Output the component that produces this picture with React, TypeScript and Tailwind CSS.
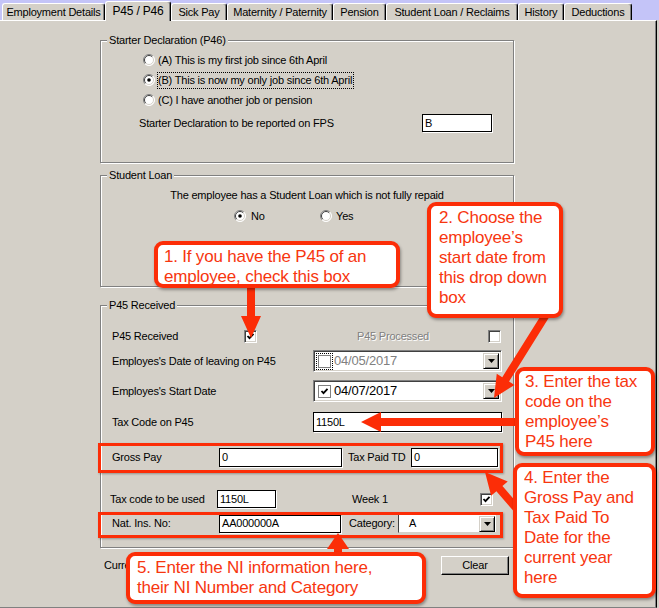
import React from 'react';

const RED = '#fc2d07';

const tabs = [
  { label: 'Employment Details', w: 'w-[103px]' },
  { label: 'P45 / P46', w: 'w-[66px]', active: true },
  { label: 'Sick Pay', w: 'w-[56px]' },
  { label: 'Maternity / Paternity', w: 'w-[106px]' },
  { label: 'Pension', w: 'w-[53px]' },
  { label: 'Student Loan / Reclaims', w: 'w-[132px]' },
  { label: 'History', w: 'w-[46px]' },
  { label: 'Deductions', w: 'w-[68px]' },
];

function Radio({ checked }: { checked?: boolean }) {
  return (
    <svg width="12" height="12" viewBox="0 0 12 12" className="shrink-0">
      <circle cx="6" cy="6" r="5.5" fill="#fff" />
      <path d="M2.1 9.9A5.5 5.5 0 0 1 9.9 2.1" stroke="#808080" fill="none" />
      <path d="M2.8 9.2A4.5 4.5 0 0 1 9.2 2.8" stroke="#404040" fill="none" />
      <path d="M9.9 2.1A5.5 5.5 0 0 1 2.1 9.9" stroke="#fff" fill="none" />
      <path d="M9.2 2.8A4.5 4.5 0 0 1 2.8 9.2" stroke="#d4d0c8" fill="none" />
      {checked && <circle cx="6" cy="6" r="1.8" fill="#000" />}
    </svg>
  );
}

function Check({ checked, flat }: { checked?: boolean; flat?: boolean }) {
  return (
    <div
      className={`w-[13px] h-[13px] shrink-0 bg-white flex items-center justify-center border ${
        flat
          ? 'border-[#808080]'
          : 'border-t-[#808080] border-l-[#808080] border-r-white border-b-white shadow-[inset_1px_1px_0_#404040,inset_-1px_-1px_0_#d4d0c8]'
      }`}
    >
      {checked && (
        <svg width="9" height="9" viewBox="0 0 9 9">
          <polyline points="1.5,4 3.5,6.2 7.5,1.8" fill="none" stroke="#000" strokeWidth="1.8" />
        </svg>
      )}
    </div>
  );
}

function DropBtn() {
  return (
    <div className="w-[16px] h-[16px] shrink-0 bg-[#d4d0c8] border border-t-[#d4d0c8] border-l-[#d4d0c8] border-r-black border-b-black shadow-[inset_1px_1px_0_#fff,inset_-1px_-1px_0_#808080] flex items-center justify-center">
      <svg width="7" height="4" viewBox="0 0 7 4">
        <polygon points="0,0 7,0 3.5,4" fill="#000" />
      </svg>
    </div>
  );
}

function Input({ value, w, h = 'h-[19px]' }: { value: string; w: string; h?: string }) {
  return (
    <div className={`${w} ${h} bg-white border border-black shadow-[1px_1px_0_#fff] flex items-center pl-[2px] text-black`}>
      {value}
    </div>
  );
}

function DatePicker({ value, checked, disabled }: { value: string; checked?: boolean; disabled?: boolean }) {
  return (
    <div className="w-[189px] h-[22px] bg-white border border-t-[#808080] border-l-[#808080] border-r-white border-b-white shadow-[inset_1px_1px_0_#404040,inset_-1px_-1px_0_#d4d0c8] flex items-center pl-[2px] pr-[2px]">
      <div className={`p-[1px] ${disabled ? 'border border-dotted border-black' : 'border border-transparent'}`}>
        <Check checked={checked} flat />
      </div>
      <span className={`ml-[1px] flex-1 text-[13px] ${disabled ? 'text-[#808080]' : 'text-black'}`}>{value}</span>
      <DropBtn />
    </div>
  );
}

function Group({ title, className, children }: { title: string; className: string; children: React.ReactNode }) {
  return (
    <div className={`relative ml-[100px] w-[414px] border border-[#808080] shadow-[inset_1px_1px_0_#fff,1px_1px_0_#fff] ${className}`}>
      <span className="absolute -top-[8px] left-[6px] bg-[#d4d0c8] px-[2px] leading-[14px]">{title}</span>
      {children}
    </div>
  );
}

function arrow(x1: number, y1: number, x2: number, y2: number, w = 8, hl = 20, hw = 20) {
  const dx = x2 - x1;
  const dy = y2 - y1;
  const len = Math.hypot(dx, dy);
  const ux = dx / len;
  const uy = dy / len;
  const nx = -uy;
  const ny = ux;
  const bx = x2 - ux * hl;
  const by = y2 - uy * hl;
  const p = [
    [x1 + (nx * w) / 2, y1 + (ny * w) / 2],
    [bx + (nx * w) / 2, by + (ny * w) / 2],
    [bx + (nx * hw) / 2, by + (ny * hw) / 2],
    [x2, y2],
    [bx - (nx * hw) / 2, by - (ny * hw) / 2],
    [bx - (nx * w) / 2, by - (ny * w) / 2],
    [x1 - (nx * w) / 2, y1 - (ny * w) / 2],
  ];
  return p.map((q) => q.join(',')).join(' ');
}

const callout =
  'absolute bg-white border-[4px] border-[#fc2d07] rounded-[9px] text-[#f7360f] text-[17px] leading-[20px] whitespace-nowrap shadow-[1px_2px_3px_rgba(0,0,0,0.35)] font-["Liberation_Sans",Arial,sans-serif]';

export default function App() {
  return (
    <div className="relative w-[659px] h-[608px] overflow-hidden bg-[#d4d0c8] text-[11px] tracking-[-0.2px] text-black font-['Liberation_Sans',Arial,sans-serif]">
      {/* tab strip */}
      <div className="h-[20px] bg-[#c4c4f8] flex items-end pl-[2px]">
        {tabs.map((t) => (
          <div
            key={t.label}
            className={`${t.w} shrink-0 bg-[#d4d0c8] flex items-center justify-center border-t border-l border-white border-r border-r-black rounded-t-[3px] shadow-[inset_-1px_0_0_#808080] ${
              t.active ? 'h-[20px] -mb-[1px] relative z-10 pb-[2px] text-[12px]' : 'h-[17px]'
            }`}
          >
            {t.label}
          </div>
        ))}
      </div>

      {/* body */}
      <div className="w-[657px] h-[588px] border-t border-white border-r border-r-black border-b border-b-[#808080] shadow-[inset_-1px_0_0_#808080]">
        <Group title="Starter Declaration (P46)" className="mt-[19px] h-[123px] pt-[9px]">
          <div className="h-[20px] flex items-center pl-[42px] gap-[3px]">
            <Radio />
            <span>(A) This is my first job since 6th April</span>
          </div>
          <div className="h-[20px] flex items-center pl-[42px] gap-[2px]">
            <Radio checked />
            <span className="border border-dotted border-black leading-[15px] pr-[1px]">(B) This is now my only job since 6th April</span>
          </div>
          <div className="h-[20px] flex items-center pl-[42px] gap-[3px]">
            <Radio />
            <span>(C) I have another job or pension</span>
          </div>
          <div className="mt-[4px] h-[18px] flex items-center pl-[38px]">
            <span className="w-[283px]">Starter Declaration to be reported on FPS</span>
            <Input value="B" w="w-[70px]" h="h-[18px]" />
          </div>
        </Group>

        <Group title="Student Loan" className="mt-[12px] h-[112px] pt-[9px]">
          <div className="h-[20px] flex items-center justify-center">The employee has a Student Loan which is not fully repaid</div>
          <div className="mt-[1px] h-[20px] flex items-center pl-[133px]">
            <div className="w-[86px] flex items-center gap-[5px]">
              <Radio checked />
              <span>No</span>
            </div>
            <div className="flex items-center gap-[4px]">
              <Radio />
              <span>Yes</span>
            </div>
          </div>
        </Group>

        <Group title="P45 Received" className="mt-[18px] h-[243px] pt-[20px] pl-[11px]">
          <div className="h-[20px] flex items-center">
            <span className="w-[132px]">P45 Received</span>
            <Check checked />
            <span className="ml-[100px] w-[131px] text-[#808080] [text-shadow:1px_1px_0_#fff]">P45 Processed</span>
            <Check />
          </div>
          <div className="mt-[4px] h-[22px] flex items-center">
            <span className="w-[201px]">Employes's Date of leaving on P45</span>
            <DatePicker value="04/05/2017" disabled />
          </div>
          <div className="mt-[8px] h-[22px] flex items-center">
            <span className="w-[201px]">Employes's Start Date</span>
            <DatePicker value="04/07/2017" checked />
          </div>
          <div className="mt-[10px] h-[20px] flex items-center">
            <span className="w-[201px]">Tax Code on P45</span>
            <Input value="1150L" w="w-[189px]" h="h-[20px]" />
          </div>
          <div className="mt-[16px] h-[19px] flex items-center">
            <span className="w-[107px]">Gross Pay</span>
            <Input value="0" w="w-[123px]" />
            <span className="ml-[6px] w-[63px]">Tax Paid TD</span>
            <Input value="0" w="w-[87px]" />
          </div>
          <div className="mt-[23px] h-[18px] flex items-center">
            <span className="w-[107px] -ml-[2px]">Tax code to be used</span>
            <Input value="1150L" w="w-[59px]" h="h-[18px]" />
            <span className="ml-[76px] w-[128px]">Week 1</span>
            <Check checked />
          </div>
          <div className="mt-[6px] h-[19px] flex items-center">
            <span className="w-[107px]">Nat. Ins. No:</span>
            <Input value="AA000000A" w="w-[122px]" h="h-[18px]" />
            <span className="ml-[8px] w-[49px]">Category:</span>
            <div className="w-[99px] h-[19px] bg-white border border-t-[#404040] border-l-[#404040] border-r-[#d4d0c8] border-b-[#d4d0c8] flex items-center pl-[10px] pr-[1px]">
              <span className="flex-1">A</span>
              <DropBtn />
            </div>
          </div>
        </Group>

        <div className="mt-[8px] h-[19px] flex items-center pl-[104px]">
          <div className="w-[337px]">
            <span className="block w-[22px] overflow-hidden whitespace-nowrap">Current</span>
          </div>
          <div className="w-[68px] h-[19px] flex items-center justify-center bg-[#d4d0c8] border border-t-white border-l-white border-r-black border-b-black shadow-[inset_-1px_-1px_0_#808080]">
            Clear
          </div>
        </div>
      </div>

      {/* annotation boxes */}
      <div className="absolute left-[98px] top-[443px] w-[405px] h-[30px] border-[3px] border-[#fc2d07] shadow-[1px_1px_2px_rgba(0,0,0,0.3)]" />
      <div className="absolute left-[98px] top-[512px] w-[405px] h-[26px] border-[3px] border-[#fc2d07] shadow-[1px_1px_2px_rgba(0,0,0,0.3)]" />

      <svg className="absolute left-0 top-0 pointer-events-none" width="659" height="608">
        <g fill={RED}>
          <polygon points={arrow(251, 284, 251, 338, 8, 22, 20)} />
          <polygon points={arrow(549, 310, 494, 398, 8, 22, 21)} />
          <polygon points={arrow(522, 422, 361, 422, 8, 20, 20)} />
          <polygon points={arrow(524, 517, 485, 472, 8, 22, 22)} />
          <polygon points={arrow(338, 556, 338, 533, 8, 16, 22)} />
        </g>
      </svg>

      <div className={`${callout} left-[154px] top-[241px] w-[246px] h-[47px] pl-[6px] pt-[2px]`}>
        1. If you have the P45 of an
        <br />
        employee, check this box
      </div>
      <div className={`${callout} left-[427px] top-[202px] w-[136px] h-[116px] pl-[8px] pt-[2px]`}>
        2. Choose the
        <br />
        employee’s
        <br />
        start date from
        <br />
        this drop down
        <br />
        box
      </div>
      <div className={`${callout} left-[515px] top-[367px] w-[140px] h-[89px] pl-[6px] pt-[1px]`}>
        3. Enter the tax
        <br />
        code on the
        <br />
        employee’s
        <br />
        P45 here
      </div>
      <div className={`${callout} left-[513px] top-[463px] w-[143px] h-[135px] pl-[7px] pt-[1px]`}>
        4. Enter the
        <br />
        Gross Pay and
        <br />
        Tax Paid To
        <br />
        Date for the
        <br />
        current year
        <br />
        here
      </div>
      <div className={`${callout} left-[126px] top-[552px] w-[300px] h-[52px] pl-[7px] pt-[2px]`}>
        5. Enter the NI information here,
        <br />
        their NI Number and Category
      </div>
    </div>
  );
}
